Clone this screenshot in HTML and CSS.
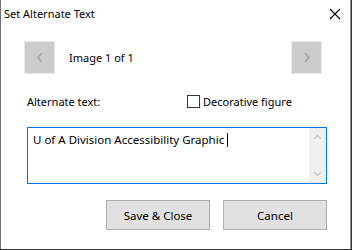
FILE: index.html
```html
<!DOCTYPE html>
<html>
<head>
<meta charset="utf-8">
<link rel="stylesheet" href="styles.css">
</head>
<body>
<div class="window">
  <div class="titlebar">
    <span class="title">Set Alternate Text</span>
    <svg class="close" width="12" height="12" viewBox="0 0 12 12"><path d="M1 1 L11 11 M11 1 L1 11" stroke="#000" stroke-width="1.1" fill="none"/></svg>
  </div>
  <div class="content">
    <div class="nav">
      <div class="navbtn"><svg width="8" height="11" viewBox="0 0 8 11"><path d="M6 1 L2 5.5 L6 10" stroke="#a3a3a3" stroke-width="1.6" fill="none"/></svg></div>
      <span class="counter">Image 1 of 1</span>
      <div class="navbtn next"><svg width="8" height="11" viewBox="0 0 8 11"><path d="M2 1 L6 5.5 L2 10" stroke="#a3a3a3" stroke-width="1.6" fill="none"/></svg></div>
    </div>
    <div class="labels">
      <span class="label">Alternate text:</span>
      <label class="check"><span class="box"></span>Decorative figure</label>
    </div>
    <div class="textarea">
      <div class="text">U of A Division Accessibility Graphic <span class="caret"></span></div>
      <div class="scroll">
        <svg width="9" height="6" viewBox="0 0 9 6"><path d="M1 5 L4.5 1.5 L8 5" stroke="#c4c4c4" stroke-width="1.3" fill="none"/></svg>
        <svg width="9" height="6" viewBox="0 0 9 6"><path d="M1 1 L4.5 4.5 L8 1" stroke="#c4c4c4" stroke-width="1.3" fill="none"/></svg>
      </div>
    </div>
    <div class="buttons">
      <div class="btn">Save &amp; Close</div>
      <div class="btn">Cancel</div>
    </div>
  </div>
</div>
</body>
</html>
```
FILE: styles.css
```css
html, body {
  margin: 0;
  padding: 0;
  background: #3a3a3a;
}
body {
  width: 352px;
  height: 250px;
  overflow: hidden;
  font-family: "Noto Sans", "Liberation Sans", sans-serif;
  font-size: 11px;
  color: #000;
}
.window {
  width: 351px;
  height: 249px;
  box-sizing: border-box;
  background: #fff;
  border-left: 1px solid #6f6f6f;
  border-right: 1px solid #8a8a8a;
  display: flex;
  flex-direction: column;
}
.titlebar {
  height: 27px;
  display: flex;
  align-items: center;
  justify-content: space-between;
  padding-left: 3px;
  padding-right: 9px;
}
.close {
  display: block;
}
.content {
  padding: 14px 23px 0 26px;
  display: flex;
  flex-direction: column;
}
.nav {
  display: flex;
  align-items: center;
  height: 33px;
  margin-left: -3px;
  margin-right: 5px;
}
.navbtn {
  width: 29px;
  height: 31px;
  background: #cccccc;
  border: 1px solid #e8e8e8;
  display: flex;
  align-items: center;
  justify-content: center;
}
.next {
  margin-left: auto;
}
.counter {
  margin-left: 14px;
}
.labels {
  display: flex;
  align-items: center;
  margin-top: 19px;
  height: 16px;
}
.label {
  width: 160px;
}
.check {
  display: flex;
  align-items: center;
  gap: 3px;
}
.box {
  width: 11px;
  height: 11px;
  border: 1px solid #333;
  background: #fff;
}
.textarea {
  margin-top: 18px;
  height: 57px;
  box-sizing: border-box;
  border: 1px solid #0078d7;
  display: flex;
}
.text {
  flex: 1;
  padding: 4px 5px;
  line-height: 16px;
  font-size: 11.5px;
}
.caret {
  display: inline-block;
  width: 1px;
  height: 14px;
  background: #000;
  vertical-align: -3px;
}
.scroll {
  width: 17px;
  background: #f0f0f0;
  display: flex;
  flex-direction: column;
  align-items: center;
  justify-content: space-between;
  padding: 6px 0;
}
.scroll svg {
  display: block;
}
.buttons {
  display: flex;
  justify-content: flex-end;
  gap: 13px;
  margin-top: 16px;
}
.btn {
  width: 102px;
  height: 28px;
  background: #e1e1e1;
  border: 1px solid #adadad;
  display: flex;
  align-items: center;
  justify-content: center;
  font-size: 11.5px;
}
```
